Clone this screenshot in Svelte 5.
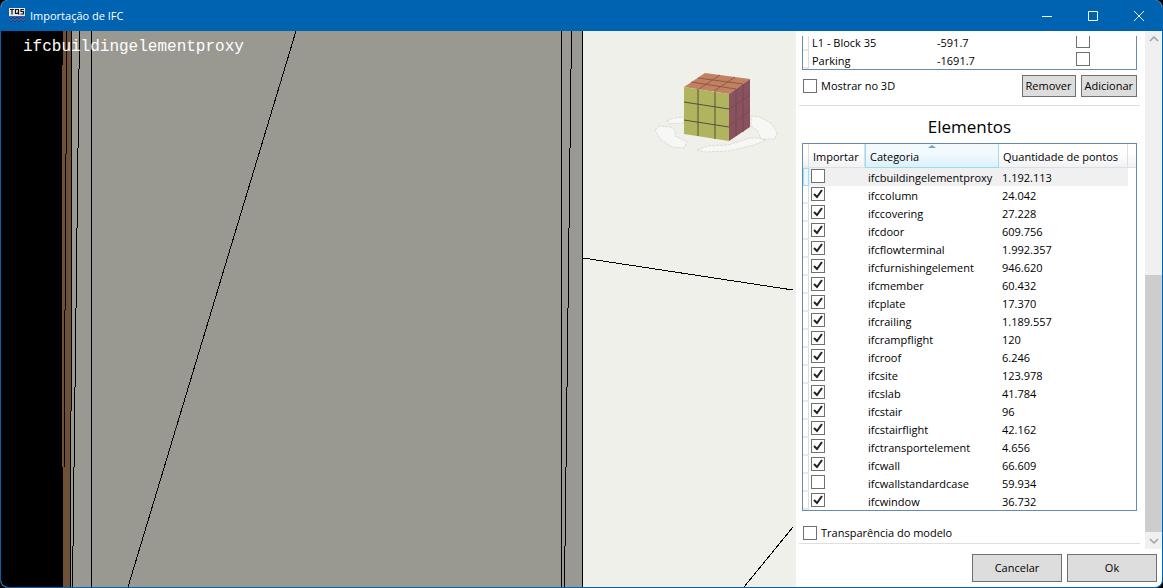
<script>
  let levels = $state([
    { name: 'L1 - Block 35', height: '-591.7', show: false },
    { name: 'Parking', height: '-1691.7', show: false },
  ]);

  let elements = $state([
    { name: 'ifcbuildingelementproxy', points: '1.192.113', on: false },
    { name: 'ifccolumn', points: '24.042', on: true },
    { name: 'ifccovering', points: '27.228', on: true },
    { name: 'ifcdoor', points: '609.756', on: true },
    { name: 'ifcflowterminal', points: '1.992.357', on: true },
    { name: 'ifcfurnishingelement', points: '946.620', on: true },
    { name: 'ifcmember', points: '60.432', on: true },
    { name: 'ifcplate', points: '17.370', on: true },
    { name: 'ifcrailing', points: '1.189.557', on: true },
    { name: 'ifcrampflight', points: '120', on: true },
    { name: 'ifcroof', points: '6.246', on: true },
    { name: 'ifcsite', points: '123.978', on: true },
    { name: 'ifcslab', points: '41.784', on: true },
    { name: 'ifcstair', points: '96', on: true },
    { name: 'ifcstairflight', points: '42.162', on: true },
    { name: 'ifctransportelement', points: '4.656', on: true },
    { name: 'ifcwall', points: '66.609', on: true },
    { name: 'ifcwallstandardcase', points: '59.934', on: false },
    { name: 'ifcwindow', points: '36.732', on: true },
  ]);

  let selected = $state(0);
  let show3d = $state(false);
  let transparent = $state(false);
</script>

<div class="desktop">
  <div class="window">
    <header class="titlebar">
      <svg class="logo" width="16" height="16" viewBox="0 0 16 16" aria-hidden="true">
        <rect width="16" height="14" fill="#2d63a8" />
        <rect width="16" height="8" fill="#e8e8e8" />
        <path d="M1 1.5h4M3 1.5v5M6.5 1.5h3v4h-3zM8.5 4.5l1.5 2M15 1.5h-3v2h2.5v2.5h-3" fill="none" stroke="#111" stroke-width="1.2" />
        <path d="M0 9l2 2 2-2 2 2 2-2 2 2 2-2 2 2 2-2M0 12l2 2 2-2 2 2 2-2 2 2 2-2 2 2 2-2" fill="none" stroke="#173c78" />
      </svg>
      <h1>Importação de IFC</h1>
      <div class="caption">
        <button aria-label="Minimizar"><svg width="10" height="10" viewBox="0 0 10 10"><path d="M0 5.5h10" /></svg></button>
        <button aria-label="Maximizar"><svg width="10" height="10" viewBox="0 0 10 10"><path d="M.5 .5h9v9h-9z" /></svg></button>
        <button aria-label="Fechar"><svg width="10" height="10" viewBox="0 0 10 10"><path d="M0 0l10 10M10 0L0 10" /></svg></button>
      </div>
    </header>

    <main>
      <section class="viewport">
        <svg class="scene" viewBox="0 0 792 556" preserveAspectRatio="xMinYMin slice" shape-rendering="crispEdges" aria-hidden="true">
          <rect width="792" height="556" fill="#f0f0eb" />
          <rect width="62" height="556" fill="#000" />
          <path d="M62 0h9v556h-9V436h-1V34h1z" fill="#6e5137" />
          <path d="M71 0H582V556H70V380h1z" fill="#9a9991" />
          <g fill="none" stroke="#000">
            <path d="M65.5 0V123M64.5 123V279M63.5 279V436M70.5 0V380M69.5 380V556M78.5 0L71.5 556M90.5 0V556M295 0L127 556" />
            <path d="M560.5 0V556M570.5 0L563.5 556M581.5 0V556M582 227L792 259M792 496L743 556" />
          </g>
        </svg>
        <span class="layer">ifcbuildingelementproxy</span>
        <svg class="cube" width="126" height="88" viewBox="0 0 126 88" aria-hidden="true">
          <g fill="#f7f7f5" stroke="#dcdcd7" stroke-dasharray="3 1">
            <path d="M13 51l7-3 10-1v6l-15 1zM1 60l4-4 12 1 4 3 0 6 12 6-3 6-12-1-12-8z" />
            <path d="M43 80l11-4 20-1 22-7 8 0 8 2-12 5-25 6-24 1zM97 46l9 1 12 7 5 9-2 6-14 0-3-8-7-5z" />
          </g>
          <path d="M30 17L51 3 96 9 75 24z" fill="#c28162" />
          <path d="M30 17L75 24V71L30 64z" fill="#b1b45f" />
          <path d="M75 24L96 9V57L75 71z" fill="#88525f" />
          <g fill="none">
            <path d="M44 19v47M61 22v47M30 32l45 7M30 50l45 7" stroke="#55523b" />
            <path d="M45 19L66 5M60 21L81 7M37 12l45 7M44 8l45 6" stroke="#8f5a43" />
            <path d="M82 19v47M89 14v48M75 39l21-14M75 56l21-15" stroke="#7a4753" />
          </g>
        </svg>
      </section>

      <aside>
        <div class="scroll">
          <div class="content">
            <div class="grid levels">
              <table aria-label="Níveis">
                <tbody>
                  {#each levels as level}
                    <tr>
                      <td class="rowhead"></td>
                      <td class="level">{level.name}</td>
                      <td class="height">{level.height}</td>
                      <td class="check"><input type="checkbox" aria-label={level.name} bind:checked={level.show} /></td>
                    </tr>
                  {/each}
                </tbody>
              </table>
            </div>
            <div class="tools">
              <label><input type="checkbox" bind:checked={show3d} />Mostrar no 3D</label>
              <button class="btn">Remover</button>
              <button class="btn">Adicionar</button>
            </div>
            <h2>Elementos</h2>
            <div class="grid">
              <table>
                <thead>
                  <tr>
                    <th class="rowhead"></th>
                    <th class="import">Importar</th>
                    <th class="category" aria-sort="ascending">Categoria</th>
                    <th class="points">Quantidade de pontos</th>
                    <th></th>
                  </tr>
                </thead>
                <tbody>
                  {#each elements as element, i}
                    <tr class:selected={i === selected} onclick={() => (selected = i)}>
                      <td class="rowhead"></td>
                      <td class="check"><input type="checkbox" aria-label={element.name} bind:checked={element.on} /></td>
                      <td>{element.name}</td>
                      <td>{element.points}</td>
                    </tr>
                  {/each}
                </tbody>
              </table>
            </div>
            <label class="transparency"><input type="checkbox" bind:checked={transparent} />Transparência do modelo</label>
          </div>
          <div class="scrollbar" aria-hidden="true">
            <svg width="17" height="17" viewBox="0 0 17 17"><path d="M5 10l4-4 4 4" /></svg>
            <div class="track"><div class="thumb"></div></div>
            <svg width="17" height="17" viewBox="0 0 17 17"><path d="M5 7l4 4 4-4" /></svg>
          </div>
        </div>
        <footer>
          <button class="btn">Cancelar</button>
          <button class="btn">Ok</button>
        </footer>
      </aside>
    </main>
  </div>
</div>

<style>
  :global(body) { margin:0; background:#000; }
  .desktop { height:100vh; background:#000; font:11px/16px 'Open Sans', 'Noto Sans', sans-serif; color:#000; }
  .window { box-sizing:border-box; height:100%; display:flex; flex-direction:column; border:1px solid #0063b1; border-top:0; border-radius:8px; overflow:hidden; background:#fff; }
  button { font:inherit; color:inherit; margin:0; }

  .titlebar { flex:none; height:31px; display:flex; align-items:center; padding-left:8px; background:#0063b1; color:#fff; }
  .titlebar h1 { flex:1; margin:0 0 0 5px; font-size:11px; font-weight:400; }
  .caption { display:flex; height:100%; }
  .caption button { width:46px; padding:0; border:0; background:none; display:flex; align-items:center; justify-content:center; }
  .caption svg { fill:none; stroke:#fff; }

  main { flex:1; min-height:0; display:flex; }
  .viewport { flex:1; min-width:0; position:relative; overflow:hidden; }
  .scene { display:block; width:100%; height:100%; }
  .layer { position:absolute; left:22px; top:6px; font:16px/20px 'Liberation Mono', monospace; color:#fff; }
  .cube { position:absolute; right:13px; top:39px; }

  aside { flex:none; width:366px; display:flex; flex-direction:column; border-left:3px solid #f0f0f0; }
  .scroll { flex:1; min-height:0; display:flex; }
  .content { flex:1; padding:5px 5px 0 3px; }
  .grid { margin:0 3px; border:1px solid #688caf; }
  .levels { display:flex; align-items:flex-end; height:33px; overflow:hidden; border-top:0; }
  table { width:100%; border-collapse:separate; border-spacing:0; table-layout:fixed; }
  td, th { box-sizing:border-box; height:18px; padding:2px 3px 0; line-height:14px; font-weight:400; text-align:left; white-space:nowrap; }
  .rowhead { width:6px; padding:0; border-right:1px solid #dcdcdc; border-bottom:2px solid #e9e9e9; }
  .level { width:125px; }
  .height { width:140px; }
  .check { padding:1px 2px; vertical-align:top; }
  .import { width:56px; }
  .category { width:134px; }
  .points { width:129px; }
  th { height:24px; padding:2px 4px 0; background:linear-gradient(#fff 40%, #f1f2f4); border-right:1px solid #dcdfe4; border-bottom:1px solid #dcdfe4; }
  th:last-child { border-right:0; }
  th.category { position:relative; background:linear-gradient(#f2fafd 40%, #dcf1f9); border:1px solid #9bdcf5; border-top:0; }
  th.category::after { content:''; position:absolute; left:62px; top:1px; border:4px solid transparent; border-top:0; border-bottom:3px solid #7ba5b8; }
  .selected td:not(.rowhead) { background:#f0f0f0; }
  .selected .rowhead { border:1px solid #9bdcf5; background:#eaf7fc; }

  input { appearance:none; box-sizing:border-box; width:14px; height:14px; margin:0; border:1px solid #707070; background:#fff; display:block; flex:none; }
  input:checked { background:#fff url("data:image/svg+xml,%3Csvg xmlns='http://www.w3.org/2000/svg' viewBox='0 0 12 12'%3E%3Cpath d='M2 6l3 3 5-7' fill='none' stroke='%23212121' stroke-width='2'/%3E%3C/svg%3E") center / 12px; }
  label { display:flex; align-items:center; gap:4px; }

  .tools { display:flex; align-items:center; gap:5px; padding:5px 3px 8px 4px; border-bottom:1px solid #dfdfdf; }
  .tools label { flex:1; }
  .btn { box-sizing:border-box; height:22px; padding:0 3px; border:1px solid #707070; background:#ddd; white-space:nowrap; }
  h2 { margin:9px 0 4px; font-size:17px; line-height:24px; font-weight:400; text-align:center; }
  .transparency { margin-top:14px; padding:0 4px 2px; border-bottom:1px solid #dfdfdf; }

  .scrollbar { flex:none; width:17px; display:flex; flex-direction:column; background:#f0f0f0; }
  .scrollbar svg { fill:none; stroke:#a0a0a0; stroke-width:1.5; }
  .track { flex:1; display:flex; flex-direction:column; justify-content:flex-end; }
  .thumb { height:53%; background:#cdcdcd; }

  footer { flex:none; display:flex; justify-content:flex-end; gap:5px; padding:5px; }
  footer .btn { width:90px; height:28px; }
</style>
